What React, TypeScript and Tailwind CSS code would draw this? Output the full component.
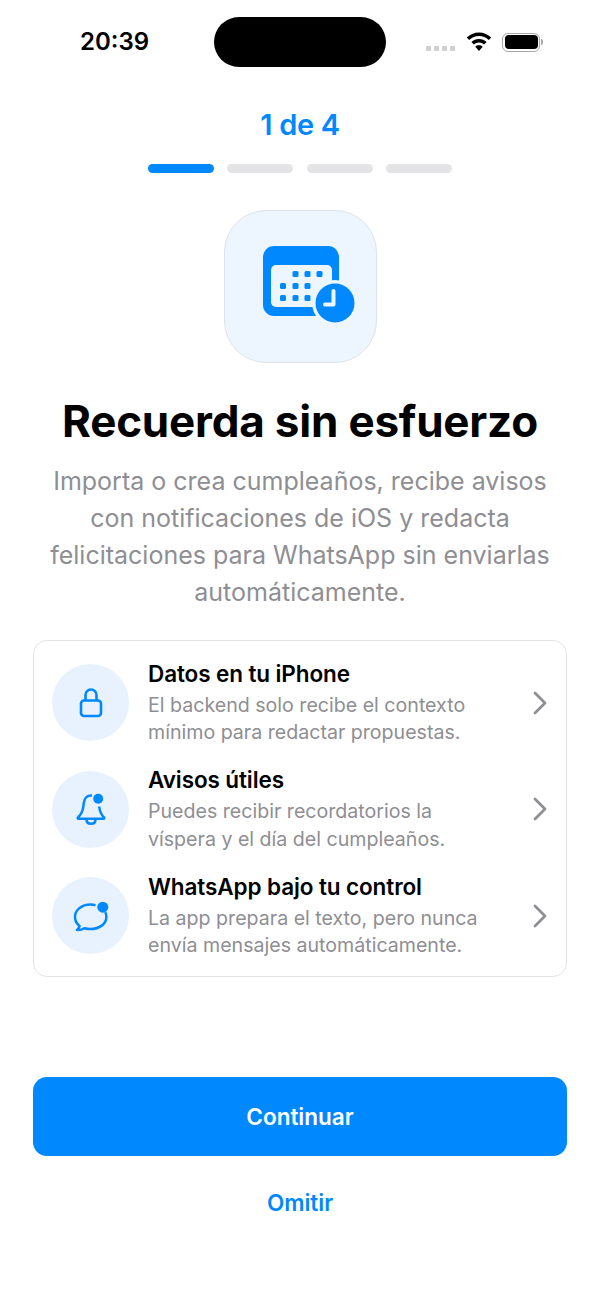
const ROWS = [
  {
    title: "Datos en tu iPhone",
    lines: ["El backend solo recibe el contexto", "mínimo para redactar propuestas."],
    icon: "lock",
  },
  {
    title: "Avisos útiles",
    lines: ["Puedes recibir recordatorios la", "víspera y el día del cumpleaños."],
    icon: "bell",
  },
  {
    title: "WhatsApp bajo tu control",
    lines: ["La app prepara el texto, pero nunca", "envía mensajes automáticamente."],
    icon: "chat",
  },
];

const BLUE = "#0088ff";
const TILE = "#edf5fe";

const LockIcon = () => (
  <svg width="28" height="32" viewBox="0 0 28 32" fill="none" stroke={BLUE} strokeWidth="2.600">
    <rect x="4" y="13.500" width="20" height="15.500" rx="3" />
    <path d="M8.500 13.500V8a5.500 5.500 0 0 1 11 0v5.500" />
  </svg>
);

const BellIcon = () => (
  <svg width="32" height="36" viewBox="0 0 32 36" fill="none" stroke={BLUE} strokeWidth="2.500" strokeLinejoin="round">
    <path d="M17 4.500C12 4 9.300 7.500 8.800 12c-.6 6-1.300 10-5.800 14.500-.6.6-.2 1.300.6 1.300h24.800c.8 0 1.200-.7.6-1.300-3-3-4.300-6-4.800-11" />
    <path d="M11.500 28.500c0 2.800 2 4.300 4.500 4.300s4.500-1.500 4.500-4.300" />
    <circle cx="23.200" cy="7.800" r="5" fill={BLUE} stroke="none" />
  </svg>
);

const ChatIcon = () => (
  <svg width="38" height="32" viewBox="0 0 38 32" fill="none" stroke={BLUE} strokeWidth="2.500" strokeLinejoin="round">
    <path d="M23.500 5.200C21.800 4.700 20 4.500 18.500 4.500 9.500 4.500 3 10 3 17c0 3.600 1.700 6.800 4.600 9-.2 1.400-1 2.700-2.600 3.900 2.700.1 5.300-.4 7.400-1.700 1.900.5 3.800.8 6 .8 9 0 16-5 16-12 0-1.800-.4-3.400-1.200-4.800" />
    <circle cx="30.800" cy="7.200" r="5.500" fill={BLUE} stroke="none" />
  </svg>
);

const ICONS: Record<string, () => React.JSX.Element> = {
  lock: LockIcon,
  bell: BellIcon,
  chat: ChatIcon,
};

const StatusBar = () => (
  <div className="h-[67px] pt-[17px] pl-[80px] flex items-center">
    <span className="w-[68px] text-[24px] leading-none font-semibold text-black">20:39</span>
    <div className="ml-[66px] w-[172px] h-[50px] rounded-full bg-black" />
    <div className="ml-[40px] flex items-center">
      <div className="flex gap-[3px] mt-[13px] mr-[11px]">
        <span className="w-[5px] h-[5px] rounded-[1px] bg-[#d0d0d2]" />
        <span className="w-[5px] h-[5px] rounded-[1px] bg-[#d0d0d2]" />
        <span className="w-[5px] h-[5px] rounded-[1px] bg-[#d0d0d2]" />
        <span className="w-[5px] h-[5px] rounded-[1px] bg-[#d0d0d2]" />
      </div>
      <svg width="26" height="20" viewBox="0 0 26 20" fill="black">
        <path d="M13 .5C8 .5 4 2.500 .8 5.500l2.400 2.500C6 5.500 9.300 4 13 4s7 1.500 9.800 4l2.400-2.500C22 2.500 18 .5 13 .5z" />
        <path d="M13 7c-3 0-5.600 1.200-7.600 3l2.500 2.500C9.300 11.300 11 10.500 13 10.500s3.700.8 5.100 2l2.500-2.500C18.600 8.200 16 7 13 7z" />
        <path d="M13 13.300c-1.500 0-2.700.5-3.700 1.400L13 19l3.700-4.300c-1-.9-2.200-1.400-3.700-1.400z" />
      </svg>
      <div className="ml-[10px] w-[38px] h-[19px] rounded-[6px] border-[1.500px] border-[#a8a8a8] p-[1.500px]">
        <div className="w-full h-full rounded-[4px] bg-black" />
      </div>
      <div className="ml-[1px] w-[2px] h-[6px] rounded-r-full bg-[#a8a8a8]" />
    </div>
  </div>
);

const HeroIcon = () => (
  <div className="mx-auto mt-[37px] w-[153px] h-[153px] rounded-[42px] bg-[#edf5fe] border border-[#dfe3e9]">
    <svg width="151" height="151" viewBox="224 211 151 151">
      <rect x="262" y="246" width="76" height="70" rx="11" fill={BLUE} />
      <rect x="270" y="265" width="61" height="42" rx="5" fill={TILE} />
      <g fill={BLUE}>
        <rect x="291.500" y="271" width="6" height="6" rx="1.500" />
        <rect x="303.500" y="271" width="6" height="6" rx="1.500" />
        <rect x="315.500" y="271" width="6" height="6" rx="1.500" />
        <rect x="279" y="283" width="6" height="6" rx="1.500" />
        <rect x="291.500" y="283" width="6" height="6" rx="1.500" />
        <rect x="303.500" y="283" width="6" height="6" rx="1.500" />
        <rect x="279" y="295" width="6" height="6" rx="1.500" />
        <rect x="291.500" y="295" width="6" height="6" rx="1.500" />
        <rect x="303.500" y="295" width="6" height="6" rx="1.500" />
      </g>
      <circle cx="334" cy="303" r="23" fill={TILE} />
      <circle cx="334" cy="303" r="19.500" fill={BLUE} />
      <path d="M332.500 291v13.500h-8.500" fill="none" stroke={TILE} strokeWidth="4" strokeLinecap="round" strokeLinejoin="round" />
    </svg>
  </div>
);

export default function App() {
  return (
    <div className="w-[600px] h-[1298px] bg-white overflow-hidden font-['Inter',sans-serif]">
      <StatusBar />
      <p className="mt-[41px] text-center text-[29px] leading-[34px] font-semibold text-[#0088ff] tracking-[-0.3px]">1 de 4</p>
      <div className="mt-[22px] flex justify-center gap-[13.500px]">
        <div className="w-[66px] h-[9px] rounded-full bg-[#0088ff]" />
        <div className="w-[66px] h-[9px] rounded-full bg-[#e4e4e6]" />
        <div className="w-[66px] h-[9px] rounded-full bg-[#e4e4e6]" />
        <div className="w-[66px] h-[9px] rounded-full bg-[#e4e4e6]" />
      </div>
      <HeroIcon />
      <h1 className="mt-[32px] text-center text-[44px] leading-[52px] font-bold text-black tracking-[-0.2px]">Recuerda sin esfuerzo</h1>
      <p className="mt-[16px] text-center text-[25px] leading-[37px] text-[#8e8e93]">
        Importa o crea cumpleaños, recibe avisos
        <br />
        con notificaciones de iOS y redacta
        <br />
        felicitaciones para WhatsApp sin enviarlas
        <br />
        automáticamente.
      </p>
      <div className="mx-[33px] mt-[29px] h-[337px] rounded-[14px] border border-[#e3e3e6] pl-[18px] pr-[20px] pt-[23px] flex flex-col gap-[29.500px]">
        {ROWS.map((row) => {
          const Icon = ICONS[row.icon];
          return (
            <div key={row.title} className="h-[77px] flex items-center">
              <div className="w-[77px] h-[77px] rounded-full bg-[#e7f2fe] flex items-center justify-center shrink-0">
                <Icon />
              </div>
              <div className="ml-[19px] flex-1 mt-[1px]">
                <p className="mb-[4px] text-[22.500px] leading-[28px] font-semibold text-black tracking-[-0.1px]">{row.title}</p>
                {row.lines.map((line) => (
                  <p key={line} className="text-[19.600px] leading-[27.500px] text-[#8e8e93]">{line}</p>
                ))}
              </div>
              <svg width="14" height="24" viewBox="0 0 14 24" fill="none" stroke="#8e8e93" strokeWidth="2.800" strokeLinecap="round" strokeLinejoin="round" className="ml-[1px] mr-[-1px]">
                <path d="M2 2l10 10L2 22" />
              </svg>
            </div>
          );
        })}
      </div>
      <button className="mx-[33px] mt-[100px] w-[534px] h-[79px] rounded-[14px] bg-[#0088ff] text-white text-[22.500px] font-semibold">
        Continuar
      </button>
      <p className="mt-[33px] text-center text-[22.500px] leading-[28px] font-semibold text-[#0088ff]">Omitir</p>
    </div>
  );
}
